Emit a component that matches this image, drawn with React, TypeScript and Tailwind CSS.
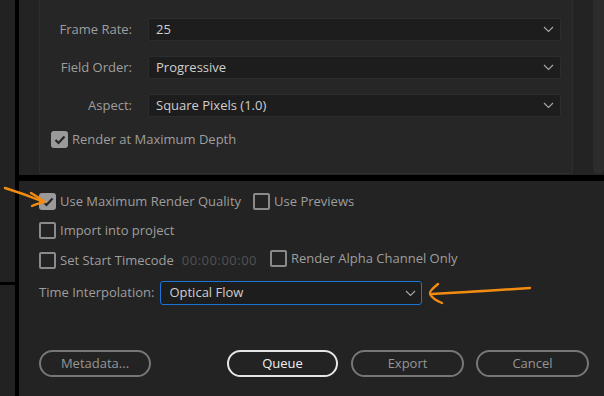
import React from "react";

const font = { fontFamily: '"Open Sans", "Liberation Sans", sans-serif' };

function Chevron({ className = "" }: { className?: string }) {
  return (
    <svg width="11" height="7" viewBox="0 0 11 7" className={className}>
      <path d="M1 1 L5.5 5.5 L10 1" fill="none" stroke="#a8a8a8" strokeWidth="1.1" />
    </svg>
  );
}

function Check({ checked }: { checked?: boolean }) {
  if (checked) {
    return (
      <div className="w-[17px] h-[17px] rounded-[3px] bg-[#9a9a9a] flex items-center justify-center shrink-0">
        <svg width="12" height="10" viewBox="0 0 12 10">
          <path d="M1.5 5 L4.5 8 L10.5 1.5" fill="none" stroke="#262626" strokeWidth="2.2" />
        </svg>
      </div>
    );
  }
  return <div className="w-[17px] h-[17px] rounded-[2px] border-2 border-[#8a8a8a] shrink-0" />;
}

function SelectRow({ label, value }: { label: string; value: string }) {
  return (
    <div className="flex items-center h-[23px]">
      <div className="w-[93px] text-right text-[13px] text-[#9e9e9e] pr-[1px]">{label}</div>
      <div className="ml-[15px] w-[413px] h-[23px] bg-[#1d1d1d] border border-[#2c2c2c] rounded-[2px] flex items-center justify-between pl-[7px] pr-[6px]">
        <span className="text-[13px] text-[#cfcfcf]">{value}</span>
        <Chevron />
      </div>
    </div>
  );
}

function Button({ label, primary, className = "" }: { label: string; primary?: boolean; className?: string }) {
  return (
    <div
      className={`h-[27px] rounded-full border-2 flex items-center justify-center text-[13px] ${
        primary ? "border-[#e6e6e6] text-[#f0f0f0]" : "border-[#777777] text-[#969696]"
      } ${className}`}
    >
      {label}
    </div>
  );
}

export default function App() {
  return (
    <div className="relative w-[604px] h-[396px] flex bg-[#232323] overflow-hidden select-none" style={font}>
      {/* left column */}
      <div className="w-[15px] flex flex-col">
        <div className="h-[282px] bg-[#222222]" />
        <div className="h-[3px] bg-black" />
        <div className="flex-1 bg-[#222222]" />
      </div>
      <div className="w-[4px] bg-black" />
      {/* main */}
      <div className="flex-1 flex flex-col">
        <div className="h-[175px] flex bg-[#232323]">
          <div className="ml-[20px] w-[534px] h-[174px] bg-[#262626] border border-t-0 border-[#2d2d2d] rounded-b-[2px] flex flex-col pt-[18px]">
            <div className="flex flex-col gap-[15px]">
              <SelectRow label="Frame Rate:" value="25" />
              <SelectRow label="Field Order:" value="Progressive" />
              <SelectRow label="Aspect:" value="Square Pixels (1.0)" />
            </div>
            <div className="flex items-center mt-[13px] ml-[11px] gap-[4px]">
              <Check checked />
              <span className="text-[13px] text-[#9e9e9e]">Render at Maximum Depth</span>
            </div>
          </div>
          <div className="ml-[20px] w-[11px] h-[174px] bg-[#2c2c2c] rounded-b-[5px]" />
        </div>
        <div className="h-[6px] bg-black" />
        <div className="flex-1 flex flex-col pl-[20px] pt-[12px] text-[13px] text-[#9e9e9e]">
          <div className="flex items-center h-[17px]">
            <Check checked />
            <span className="ml-[4px]">Use Maximum Render Quality</span>
            <div className="ml-[12px]"><Check /></div>
            <span className="ml-[4px]">Use Previews</span>
          </div>
          <div className="flex items-center h-[17px] mt-[12px]">
            <Check />
            <span className="ml-[4px]">Import into project</span>
          </div>
          <div className="flex items-center h-[17px] mt-[13px]">
            <Check />
            <span className="ml-[4px]">Set Start Timecode</span>
            <span className="ml-[8px] text-[13px] tracking-[0.5px] text-[#525252]">00:00:00:00</span>
            <div className="ml-[13px] -mt-[4px]"><Check /></div>
            <span className="ml-[4px] -mt-[4px]">Render Alpha Channel Only</span>
          </div>
          <div className="flex items-center mt-[12px]">
            <span>Time Interpolation:</span>
            <div className="ml-[6px] w-[262px] h-[24px] bg-[#1d1d1d] border border-[#1b75d8] rounded-[3px] flex items-center justify-between pl-[8px] pr-[5px]">
              <span className="text-[#cfcfcf]">Optical Flow</span>
              <Chevron />
            </div>
          </div>
          <div className="flex mt-[45px]">
            <Button label="Metadata..." className="w-[112px]" />
            <Button label="Queue" primary className="w-[111px] ml-[76px]" />
            <Button label="Export" className="w-[113px] ml-[13px]" />
            <Button label="Cancel" className="w-[113px] ml-[12px]" />
          </div>
        </div>
      </div>
      {/* orange annotation arrows */}
      <svg className="absolute left-0 top-0 pointer-events-none" width="604" height="396">
        <path d="M5 188 C 18 192, 32 197, 44 202" fill="none" stroke="#f28c10" strokeWidth="2.4" strokeLinecap="round" />
        <path d="M31 193 C 36 196, 41 199, 45 202 C 40 203, 36 204, 32 206" fill="none" stroke="#f28c10" strokeWidth="2.4" strokeLinecap="round" strokeLinejoin="round" />
        <path d="M530 288 C 500 290, 470 292, 432 294" fill="none" stroke="#f28c10" strokeWidth="2.4" strokeLinecap="round" />
        <path d="M438 284 C 433 288, 429 292, 430 294 C 432 298, 437 301, 442 303" fill="none" stroke="#f28c10" strokeWidth="2.4" strokeLinecap="round" strokeLinejoin="round" />
      </svg>
    </div>
  );
}
